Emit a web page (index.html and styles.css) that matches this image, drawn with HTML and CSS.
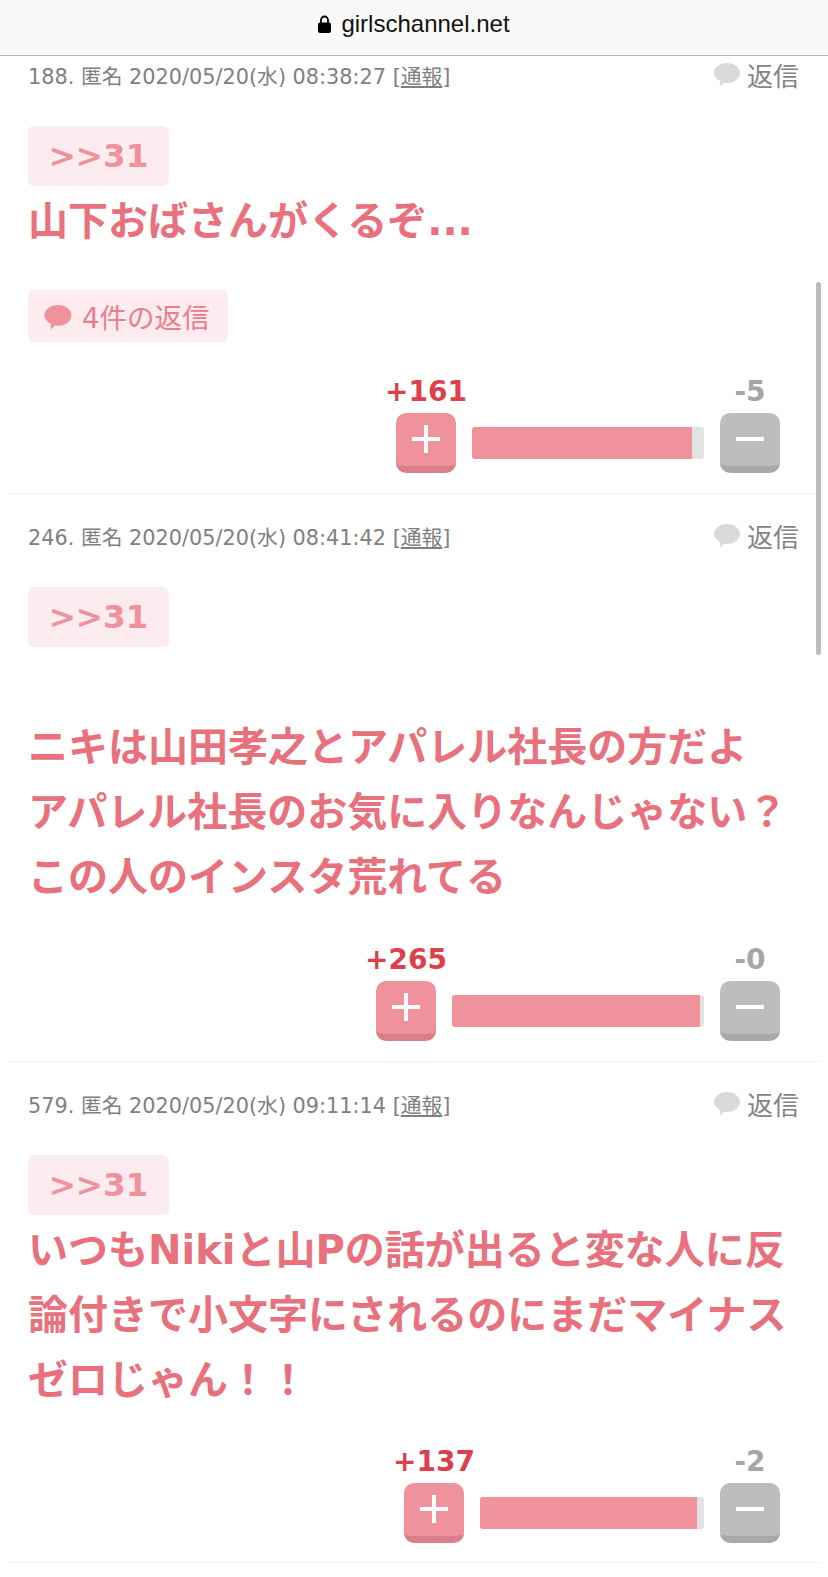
FILE: index.html
```html
<!DOCTYPE html>
<html lang="ja">
<head>
<meta charset="utf-8">
<title>girlschannel.net</title>
<link rel="stylesheet" href="styles.css">
</head>
<body>
<header class="bar">
  <svg class="lock" viewBox="0 0 13 18"><path d="M3 8V5a3.5 3.5 0 0 1 7 0v3" fill="none" stroke="#000" stroke-width="1.8"/><rect x="0" y="7.5" width="13" height="10.5" rx="2" fill="#000"/></svg>
  <span class="url">girlschannel.net</span>
</header>
<div class="scrollbar"></div>
<main class="list">

  <article class="comment">
    <div class="meta">
      <span class="info">188. 匿名 2020/05/20(水) 08:38:27 [<u>通報</u>]</span>
      <span class="reply"><svg class="bubble" viewBox="0 0 27 25"><path d="M13.5 0C21 0 27 4.6 27 10.4S21 20.8 13.5 20.8c-1 0-2 -.1-3-.3L6 24.5l.6-5.8C2.600 16.800 0 13.900 0 10.400 0 4.600 6 0 13.500 0z"/></svg>返信</span>
    </div>
    <div class="body">
      <span class="anchor">&gt;&gt;31</span>
      <p class="text">山下おばさんがくるぞ...</p>
    </div>
    <div class="replies"><svg class="bubble-pink" viewBox="0 0 27 25"><path d="M13.5 0C21 0 27 4.6 27 10.4S21 20.8 13.5 20.8c-1 0-2 -.1-3-.3L6 24.5l.6-5.8C2.600 16.800 0 13.900 0 10.400 0 4.600 6 0 13.500 0z"/></svg>4件の返信</div>
    <div class="votes votes-a">
      <div class="vote">
        <span class="num num-plus">+161</span>
        <span class="btn btn-plus"><svg class="sign" viewBox="0 0 30 30"><path d="M13 1h4v12h12v4H17v12h-4V17H1v-4h12z"/></svg></span>
      </div>
      <div class="track" style="width:232px"><div class="fill" style="width:95%"></div></div>
      <div class="vote">
        <span class="num num-minus">-5</span>
        <span class="btn btn-minus"><svg class="sign" viewBox="0 0 30 30"><path d="M1 13h28v4H1z"/></svg></span>
      </div>
    </div>
  </article>

  <article class="comment">
    <div class="meta">
      <span class="info">246. 匿名 2020/05/20(水) 08:41:42 [<u>通報</u>]</span>
      <span class="reply"><svg class="bubble" viewBox="0 0 27 25"><path d="M13.5 0C21 0 27 4.6 27 10.4S21 20.8 13.5 20.8c-1 0-2 -.1-3-.3L6 24.5l.6-5.8C2.600 16.800 0 13.900 0 10.400 0 4.600 6 0 13.500 0z"/></svg>返信</span>
    </div>
    <div class="body">
      <span class="anchor">&gt;&gt;31</span>
      <p class="text"><br>ニキは山田孝之とアパレル社長の方だよ<br>アパレル社長のお気に入りなんじゃない？<br>この人のインスタ荒れてる</p>
    </div>
    <div class="votes votes-b">
      <div class="vote">
        <span class="num num-plus">+265</span>
        <span class="btn btn-plus"><svg class="sign" viewBox="0 0 30 30"><path d="M13 1h4v12h12v4H17v12h-4V17H1v-4h12z"/></svg></span>
      </div>
      <div class="track" style="width:252px"><div class="fill" style="width:98.500%"></div></div>
      <div class="vote">
        <span class="num num-minus">-0</span>
        <span class="btn btn-minus"><svg class="sign" viewBox="0 0 30 30"><path d="M1 13h28v4H1z"/></svg></span>
      </div>
    </div>
  </article>

  <article class="comment">
    <div class="meta">
      <span class="info">579. 匿名 2020/05/20(水) 09:11:14 [<u>通報</u>]</span>
      <span class="reply"><svg class="bubble" viewBox="0 0 27 25"><path d="M13.5 0C21 0 27 4.6 27 10.4S21 20.8 13.5 20.8c-1 0-2 -.1-3-.3L6 24.5l.6-5.8C2.600 16.800 0 13.900 0 10.400 0 4.600 6 0 13.500 0z"/></svg>返信</span>
    </div>
    <div class="body">
      <span class="anchor">&gt;&gt;31</span>
      <p class="text">いつもNikiと山Pの話が出ると変な人に反<br>論付きで小文字にされるのにまだマイナス<br>ゼロじゃん！！</p>
    </div>
    <div class="votes votes-c">
      <div class="vote">
        <span class="num num-plus">+137</span>
        <span class="btn btn-plus"><svg class="sign" viewBox="0 0 30 30"><path d="M13 1h4v12h12v4H17v12h-4V17H1v-4h12z"/></svg></span>
      </div>
      <div class="track" style="width:224px"><div class="fill" style="width:97%"></div></div>
      <div class="vote">
        <span class="num num-minus">-2</span>
        <span class="btn btn-minus"><svg class="sign" viewBox="0 0 30 30"><path d="M1 13h28v4H1z"/></svg></span>
      </div>
    </div>
  </article>

</main>
</body>
</html>
```
FILE: styles.css
```css
* { box-sizing: border-box; }
html, body { margin: 0; height: 1577px; overflow: hidden; background: #fff; }
body { position: relative; font-family: "DejaVu Sans", "Noto Sans CJK JP", sans-serif; }

.bar {
  position: absolute; top: 0; left: 0; right: 0; height: 56px; z-index: 2;
  display: flex; align-items: center; justify-content: center; gap: 10px;
  background: #f9f9f9; border-bottom: 1px solid #b4b4b4; padding-bottom: 8px;
}
.lock { width: 13px; height: 18px; }
.url { font-family: "Liberation Sans", sans-serif; font-size: 24px; color: #111; }

.scrollbar {
  position: absolute; left: 816px; top: 282px; width: 5px; height: 373px;
  background: #bcbcbc; border-radius: 3px; z-index: 2;
}

.list { padding: 33px 8px 0; width: 828px; }
.comment { padding: 27px 20px 0; border-bottom: 1px solid #f0f0f0; width: 812px; height: 461px; }
.comment + .comment { height: 568px; }
.comment + .comment + .comment { height: 501px; }

.meta { display: flex; justify-content: space-between; align-items: center; height: 30px; }
.info { font-size: 20.800px; font-weight: 400; color: #808080; white-space: nowrap; }
.reply { display: flex; align-items: center; gap: 7px; font-size: 26px; color: #858585; margin-right: 1px; margin-top: -2px; }
.bubble { width: 26px; height: 24px; fill: #d9d9d9; margin-top: 2px; }

.body { margin-top: 36px; }
.anchor {
  display: block; width: 141px; height: 60px; border-radius: 6px; background: #fdecef;
  color: #ef929c; font-weight: 700; font-size: 32.500px;
  line-height: 60px; text-align: center;
}
.text {
  margin: 3px 0 0; font-size: 40px; line-height: 65px; font-weight: 700; color: #e8717d; white-space: nowrap;
}

.replies {
  display: flex; align-items: center; gap: 10px; width: 200px; height: 52px; margin-top: 36px;
  padding-left: 16px; border-radius: 6px; background: #fdecef; color: #e8808b; font-size: 27.500px;
}
.bubble-pink { width: 28px; height: 25px; fill: #f0929c; margin-top: 3px; }

.votes { display: flex; justify-content: flex-end; align-items: flex-end; gap: 16px; padding-right: 20px; }
.votes-a { margin-top: 29px; }
.votes-b { margin-top: 29px; }
.votes-c { margin-top: 28px; }
.vote { display: flex; flex-direction: column; align-items: center; width: 60px; }
.num { font-weight: 700; font-size: 28px; line-height: 42px; white-space: nowrap; }
.num-plus { color: #de3f4c; }
.num-minus { color: #a6a6a6; }
.btn { display: flex; align-items: center; justify-content: center; width: 60px; height: 60px; border-radius: 10px; padding-bottom: 2px; }
.btn-plus { background: #ef929c; border-bottom: 7px solid #d97f89; }
.btn-minus { background: #bdbdbd; border-bottom: 7px solid #a9a9a9; }
.sign { width: 30px; height: 30px; fill: #fff; }
.track { height: 32px; margin-bottom: 14px; background: #e3e3e3; border-radius: 3px; overflow: hidden; }
.fill { height: 100%; background: #ef929c; }
```
